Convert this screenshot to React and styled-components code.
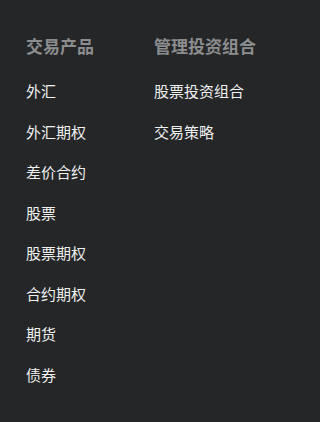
import React from "react";
import styled, { createGlobalStyle } from "styled-components";

const GlobalStyle = createGlobalStyle`
  html, body {
    margin: 0;
    padding: 0;
    background: #242628;
  }
  body {
    font-family: "Noto Sans CJK SC", "Noto Sans", sans-serif;
  }
`;

const Page = styled.div`
  display: grid;
  grid-template-columns: 128px 1fr;
  min-height: 422px;
  padding: 34px 0 0 26px;
  box-sizing: border-box;
  background: #242628;
`;

const Column = styled.div`
  display: flex;
  flex-direction: column;
`;

const Heading = styled.h3`
  margin: 0 0 23px;
  font-size: 17px;
  line-height: 24px;
  font-weight: 700;
  color: #8c8d8e;
  white-space: nowrap;
`;

const List = styled.ul`
  list-style: none;
  margin: 0;
  padding: 0;
  display: flex;
  flex-direction: column;
  gap: 20.5px;
`;

const Item = styled.li`
  font-size: 15px;
  line-height: 20px;
  color: #f0f0f0;
  white-space: nowrap;
`;

const columns = [
  {
    title: "交易产品",
    items: ["外汇", "外汇期权", "差价合约", "股票", "股票期权", "合约期权", "期货", "债券"],
  },
  {
    title: "管理投资组合",
    items: ["股票投资组合", "交易策略"],
  },
];

export default function App() {
  return (
    <>
      <GlobalStyle />
      <Page>
        {columns.map((col) => (
          <Column key={col.title}>
            <Heading>{col.title}</Heading>
            <List>
              {col.items.map((item) => (
                <Item key={item}>{item}</Item>
              ))}
            </List>
          </Column>
        ))}
      </Page>
    </>
  );
}
